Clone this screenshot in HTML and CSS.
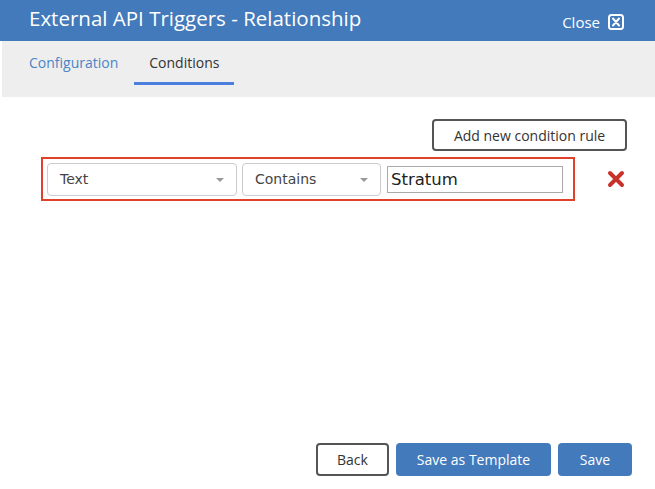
FILE: index.html
```html
<!DOCTYPE html>
<html>
<head>
<meta charset="utf-8">
<link rel="stylesheet" href="styles.css">
</head>
<body>
<div class="modal">
  <header class="header">
    <h1 class="title">External API Triggers - Relationship</h1>
    <button class="close">Close
      <svg class="close-icon" width="16" height="16" viewBox="0 0 16 16"><rect x="1" y="1" width="14" height="14" rx="2.5" fill="none" stroke="#fff" stroke-width="2"/><path d="M5 4.5 L11 11.5 M11 4.5 L5 11.5" stroke="#fff" stroke-width="2" stroke-linecap="round"/></svg>
    </button>
  </header>
  <nav class="tabs">
    <span class="tab">Configuration</span>
    <span class="tab active">Conditions</span>
  </nav>
  <main class="content">
    <div class="toolbar">
      <button class="btn btn-outline">Add new condition rule</button>
    </div>
    <div class="rule-row">
      <div class="rule">
        <div class="select sel-field"><span>Text</span><i class="caret"></i></div>
        <div class="select sel-op"><span>Contains</span><i class="caret"></i></div>
        <input class="value" type="text" value="Stratum">
      </div>
      <svg class="remove" width="18" height="18" viewBox="0 0 18 18"><path d="M3 3 L15 15 M15 3 L3 15" stroke="#c7332b" stroke-width="4" stroke-linecap="round"/></svg>
    </div>
  </main>
  <footer class="footer">
    <button class="btn btn-outline btn-back">Back</button>
    <button class="btn btn-primary btn-template">Save as Template</button>
    <button class="btn btn-primary btn-save">Save</button>
  </footer>
</div>
</body>
</html>
```
FILE: styles.css
```css
* { box-sizing: border-box; }
html, body { margin: 0; padding: 0; background: #fff; }
body { font-family: "Open Sans", "Liberation Sans", sans-serif; }
.modal { display: flex; flex-direction: column; height: 489px; width: 655px; }
.header {
  height: 41px; background: #437abc; color: #fff;
  display: flex; align-items: center; justify-content: space-between;
  padding: 0 31px 0 29px;
}
.title { margin: 0; font-size: 20.5px; font-weight: 500; line-height: 1; position: relative; top: -2px; }
.close {
  background: none; border: 0; color: #fff; font-family: inherit; font-size: 15px;
  display: flex; align-items: center; gap: 8px; padding: 0; position: relative; top: 1px;
}
.close-icon { display: block; }
.tabs {
  margin-left: 2px; height: 56px; background: #eeeeee;
  display: flex; padding-left: 12px;
}
.tab {
  font-size: 14px; color: #333; padding: 2px 15px 0; height: 44px;
  display: flex; align-items: center; border-bottom: 3px solid transparent;
}
.tab:first-child { color: #4a85c6; margin-right: 1px; }
.tab.active { border-bottom-color: #4a7fdd; width: 100px; }
.content { flex: 1; padding: 22px 28px 0 41px; }
.toolbar { display: flex; justify-content: flex-end; }
.btn {
  font-family: "Open Sans", "Liberation Sans", sans-serif; font-size: 14px;
  height: 32px; border-radius: 4px; padding: 0; cursor: pointer;
}
.btn-outline { background: #fff; border: 2px solid #555; color: #333; }
.toolbar .btn { width: 195px; }
.rule-row { display: flex; align-items: center; margin-top: 6px; }
.rule {
  width: 534px; height: 44px; border: 2px solid #e0412b;
  display: flex; align-items: center; padding: 0 10px 0 4px; gap: 5px;
}
.select {
  height: 33px; border: 1px solid #ccc; border-radius: 4px; background: #fff;
  display: flex; align-items: center; justify-content: space-between;
  padding: 0 12px 0 12px;
  font-family: "DejaVu Sans", sans-serif; font-size: 14px; color: #444;
}
.sel-field { width: 190px; }
.sel-op { width: 139px; }
.caret {
  width: 0; height: 0; border-left: 4px solid transparent; border-right: 4px solid transparent;
  border-top: 4px solid #999; margin-top: 1px;
}
.value {
  margin-left: 1px; width: 176px; height: 27px; border: 1px solid #aaa; border-radius: 0;
  font-family: "DejaVu Sans", sans-serif; font-size: 16.5px; color: #222; padding: 0 3px;
  outline: none;
}
.remove { margin-left: 32px; }
.footer {
  display: flex; justify-content: flex-end; gap: 7px;
  padding: 0 23px 13px 0;
}
.footer .btn { height: 33px; }
.btn-back { width: 73px; }
.btn-primary { background: #437abc; border: 0; color: #fff; }
.btn-template { width: 155px; }
.btn-save { width: 74px; }
```
